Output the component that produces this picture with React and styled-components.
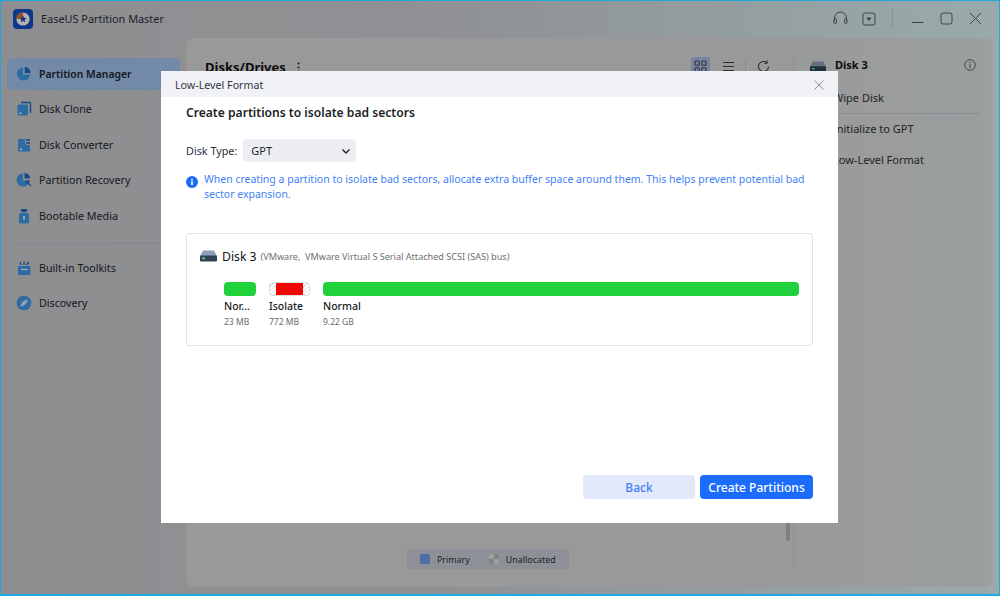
import React from "react";
import styled, { createGlobalStyle } from "styled-components";

const Global = createGlobalStyle`
  html, body { margin: 0; padding: 0; background: #8f9296; }
  * { box-sizing: border-box; }
  #root { width: 1000px; height: 596px; overflow: hidden; }
`;

const Window = styled.div`
  position: relative;
  width: 1000px;
  height: 596px;
  overflow: hidden;
  display: grid;
  grid-template-columns: 185px 1fr;
  grid-template-rows: 37px 1fr;
  font-family: "Noto Sans", "Open Sans", sans-serif;
  color: #1d2129;
  background: linear-gradient(90deg, #cccccf 0%, #cdd0d4 45%, #dcf4f4 100%);
  border: 1px solid #1fa9e4;
  border-bottom-width: 2px;
`;

const TitleBar = styled.header`
  grid-column: 1 / 3;
  display: flex;
  align-items: center;
  padding: 0 16px 2px 12px;
`;

const AppName = styled.span`
  margin-left: 8px;
  font-size: 10.9px;
  color: #2c2f36;
  flex: 1;
`;

const TitleIcons = styled.div`
  display: flex;
  align-items: center;
  color: #5a6068;
`;

const TitleBtn = styled.span`
  display: flex;
  width: 16px;
  justify-content: center;
  margin-left: ${(p) => p.$gap || 0}px;
`;

const VRule = styled.span`
  width: 1px;
  height: 18px;
  background: #c6cfcf;
  margin-left: 15px;
`;

const Sidebar = styled.nav`
  display: flex;
  flex-direction: column;
  padding: 19.5px 6px 0 6px;
`;

const NavItem = styled.div`
  display: flex;
  align-items: center;
  gap: 7px;
  height: 32px;
  margin-bottom: 3.5px;
  padding-left: 9px;
  border-radius: 5px;
  font-size: ${(p) => (p.$active ? 10.4 : 10.7)}px;
  font-weight: ${(p) => (p.$active ? 600 : 400)};
  color: #22262e;
  background: ${(p) => (p.$active ? "#a4c4f1" : "transparent")};
`;

const NavRule = styled.div`
  height: 1px;
  margin: 8px 0 7.5px 8px;
  background: #bcbdc9;
`;

const Panel = styled.main`
  position: relative;
  margin: 0 6px 7px 0;
  border-radius: 8px;
  background: linear-gradient(90deg, #dbdbdb 70%, #e0e4e4 100%);
`;

const DisksTitle = styled.h2`
  position: absolute;
  left: 19px;
  top: 20px;
  margin: 0;
  font-size: 13px;
  font-weight: 700;
  color: #111;
`;

const Kebab = styled.span`
  position: absolute;
  left: 111px;
  top: 24px;
  display: flex;
`;

const PanelTools = styled.div`
  position: absolute;
  left: 505px;
  top: 19px;
  display: flex;
  align-items: center;
  color: #40454d;
`;

const ToolActive = styled.span`
  display: flex;
  align-items: center;
  justify-content: center;
  width: 19px;
  height: 19px;
  border-radius: 3px;
  background: #a9c0e6;
`;

const ToolGap = styled.span`
  display: flex;
  margin-left: ${(p) => p.$gap}px;
`;

const ToolRule = styled.span`
  width: 1px;
  height: 16px;
  margin-left: ${(p) => p.$gap}px;
  background: #c4c4c4;
`;

const SidePanel = styled.aside`
  position: absolute;
  left: 607px;
  top: 0;
  right: 0;
  bottom: 0;
  padding: 19px 17px 0 42px;
  font-size: 11px;
  color: #333;

  &::before {
    content: "";
    position: absolute;
    left: 0;
    top: 19px;
    bottom: 18px;
    width: 1px;
    background: #d0d0d0;
  }
`;

const SideDisk = styled.span`
  position: absolute;
  left: 17px;
  top: 23px;
  display: flex;
`;

const SideHead = styled.div`
  display: flex;
  justify-content: space-between;
  align-items: center;
  font-size: 11px;
  font-weight: 700;
  color: #111;
  margin-bottom: 18px;
`;

const SideItem = styled.div`
  height: ${(p) => p.$h || 31}px;
  margin-left: -2px;
  margin-right: ${(p) => (p.$rule ? -3 : 0)}px;
  margin-bottom: ${(p) => p.$mb || 0}px;
  border-bottom: ${(p) => (p.$rule ? "1px solid #c8c8d6" : "0")};
`;

const Legend = styled.div`
  position: absolute;
  left: 221px;
  bottom: 18px;
  display: flex;
  align-items: center;
  height: 20px;
  padding: 0 13px;
  border-radius: 4px;
  background: #ccced9;
  font-size: 8.9px;
  color: #333;
`;

const Swatch = styled.span`
  width: 10px;
  height: 10px;
  margin-left: ${(p) => p.$ml || 0}px;
  margin-right: 7px;
  border-radius: 1px;
  background: ${(p) => p.$bg};
`;

const Scroll = styled.span`
  position: absolute;
  left: 600px;
  top: 470px;
  width: 4px;
  height: 33px;
  border-radius: 3px;
  background: #b8b8b8;
`;

const Overlay = styled.div`
  position: absolute;
  inset: 0;
  background: rgba(0, 0, 0, 0.3);
`;

const Modal = styled.section`
  position: absolute;
  left: 160px;
  top: 70px;
  width: 677px;
  height: 452px;
  display: flex;
  flex-direction: column;
  background: #fff;
`;

const ModalHead = styled.div`
  display: flex;
  align-items: center;
  justify-content: space-between;
  height: 26px;
  padding: 2px 14px 0 14px;
  flex: none;
  background: #f1f2f7;
  font-size: 10.7px;
  color: #333842;
`;

const ModalBody = styled.div`
  flex: 1;
  display: flex;
  flex-direction: column;
  padding: 7px 25px 24px 25px;
`;

const Heading = styled.h3`
  margin: 0 0 17px;
  font-size: 12.1px;
  line-height: 18px;
  font-weight: 600;
  color: #1c1f26;
`;

const TypeRow = styled.div`
  display: flex;
  align-items: center;
  gap: 6px;
  font-size: 10.8px;
  color: #2b2f37;
`;

const Select = styled.div`
  width: 113px;
  height: 23px;
  display: flex;
  align-items: center;
  justify-content: space-between;
  padding: 0 5px 0 8px;
  border-radius: 4px;
  background: #eceef3;
  font-size: 11px;
  color: #20242c;
`;

const Notice = styled.div`
  display: flex;
  gap: 6px;
  margin-top: 10px;
  font-size: 10.5px;
  line-height: 15px;
  color: #3f7ff7;
`;

const NoticeIcon = styled.span`
  flex: none;
  margin-top: 4px;
  height: 12px;
`;

const DiskCard = styled.div`
  margin-top: 31px;
  height: 113px;
  padding: 13px 13px 0 13px;
  border: 1px solid #dfe2e8;
  border-radius: 3px;
`;

const DiskHead = styled.div`
  display: flex;
  align-items: center;
  gap: 5px;
  height: 18px;
  font-size: 12.2px;
  color: #111;
`;

const DiskNote = styled.span`
  margin-left: -1px;
  font-size: 9.1px;
  color: #6b6f76;
`;

const Bars = styled.div`
  display: flex;
  gap: 13px;
  margin: 17px 0 0 24px;
`;

const Part = styled.div`
  flex: ${(p) => (p.$grow ? 1 : "none")};
  width: ${(p) => p.$w}px;
`;

const GreenBar = styled.div`
  height: 14px;
  border-radius: 4px;
  background: #1fd13a;
`;

const StripeBar = styled.div`
  height: 14px;
  padding: 0 6px;
  border: 1px solid #e0e0e0;
  border-radius: 3px;
  background: repeating-linear-gradient(135deg, #fff 0 2px, #ddd 2px 3px);
`;

const RedFill = styled.div`
  height: 100%;
  background: #f10606;
`;

const PartName = styled.div`
  margin-top: 2px;
  font-size: 10.5px;
  line-height: 16px;
  font-weight: 500;
  color: #1a1d23;
  white-space: nowrap;
`;

const PartSize = styled.div`
  margin-top: 1px;
  font-size: 8.5px;
  line-height: 13px;
  color: #666b72;
`;

const Actions = styled.div`
  margin-top: auto;
  display: flex;
  justify-content: flex-end;
  gap: 5px;
`;

const Button = styled.button`
  width: ${(p) => p.$w}px;
  height: 24px;
  padding: 0;
  border: 0;
  border-radius: 4px;
  font: 500 12px "Noto Sans", sans-serif;
  color: ${(p) => (p.$primary ? "#fff" : "#3f7ff7")};
  background: ${(p) => (p.$primary ? "#1c6cfb" : "#e2e9fa")};
`;

const Logo = () => (
  <svg width="20" height="20" viewBox="0 0 20 20">
    <rect width="20" height="20" rx="4" fill="#1450c8" />
    <circle cx="10" cy="10" r="6.6" fill="#fff" />
    <path d="M10 3.4A6.6 6.6 0 0 0 3.4 10H10Z" fill="#e8752a" />
    <path d="M10 6.3l1.1 2.4 2.5.3-1.9 1.7.5 2.5-2.2-1.3-2.2 1.3.5-2.5L6.4 9l2.5-.3Z" fill="#1d4fa8" />
  </svg>
);

const ic = "#3f9be8";
const icd = "#1f68c4";
const icons = {
  pie: (
    <svg width="16" height="16" viewBox="0 0 16 16">
      <path d="M7 1.5v7.2h7A6.5 6.5 0 1 1 7 1.5Z" fill={ic} />
      <path d="M8.8 1a6 6 0 0 1 5.8 6H8.8Z" fill={icd} />
    </svg>
  ),
  clone: (
    <svg width="16" height="16" viewBox="0 0 16 16">
      <path d="M5 1.5h8.5a1 1 0 0 1 1 1V12" fill="none" stroke={icd} strokeWidth="1.3" />
      <rect x="1.5" y="3.5" width="10.5" height="11" rx="1.5" fill={ic} />
      <rect x="3.3" y="11.5" width="2" height="1.5" fill="#fff" />
    </svg>
  ),
  conv: (
    <svg width="16" height="16" viewBox="0 0 16 16">
      <path d="M2 2h7v4.5L10.5 8H14v6.5H2Z" fill={ic} />
      <path d="M10 3h4M10 6h4" stroke={icd} strokeWidth="1.4" />
      <rect x="4" y="11.5" width="2" height="1.5" fill="#fff" />
    </svg>
  ),
  rec: (
    <svg width="16" height="16" viewBox="0 0 16 16">
      <path d="M7 1.5v7h6.5A6.5 6.5 0 1 1 7 1.5Z" fill={ic} />
      <path d="M8.5 1a5.5 5.5 0 0 1 5.5 5.5H8.5Z" fill={icd} />
      <path d="M15 14l-3.5-3.5M9.5 11l2-2 2 .5" stroke={icd} strokeWidth="1.4" fill="none" />
    </svg>
  ),
  boot: (
    <svg width="16" height="16" viewBox="0 0 16 16">
      <rect x="5" y="1" width="6" height="3" rx="1" fill={icd} />
      <rect x="3" y="5" width="10" height="10.5" rx="1.5" fill={ic} />
      <rect x="7.2" y="8" width="1.6" height="3.5" fill="#fff" />
    </svg>
  ),
  kit: (
    <svg width="16" height="16" viewBox="0 0 16 16">
      <rect x="2" y="6" width="12.5" height="9" rx="1" fill={ic} />
      <path d="M5 9.5h6.5" stroke="#fff" strokeWidth="1.2" />
      <path d="M4 2l1 3M8 1.5V5M13 2l-2.5 3" stroke={icd} strokeWidth="1.3" />
    </svg>
  ),
  disc: (
    <svg width="16" height="16" viewBox="0 0 16 16">
      <circle cx="8" cy="8" r="7.3" fill={ic} />
      <path d="M4.5 11.5C5 7.5 7.5 5 11.5 4.5 11.5 8.5 9 11 4.5 11.5Z" fill="#d5e6f6" />
    </svg>
  ),
};

const HardDisk = ({ w = 17 }) => (
  <svg width={w} height={(w * 12) / 17} viewBox="0 0 17 12">
    <path d="M3 0.5h11L17 6H0Z" fill="#8ba0b8" />
    <rect y="5.5" width="17" height="6" rx="1" fill="#2f4157" />
    <rect x="2" y="7.5" width="3" height="1.6" fill="#58e08a" />
  </svg>
);

const nav = [
  ["pie", "Partition Manager", true],
  ["clone", "Disk Clone"],
  ["conv", "Disk Converter"],
  ["rec", "Partition Recovery"],
  ["boot", "Bootable Media"],
];

export default function App() {
  return (
    <Window>
      <Global />
      <TitleBar>
        <Logo />
        <AppName>EaseUS Partition Master</AppName>
        <TitleIcons>
          <TitleBtn>
            <svg width="15" height="16" viewBox="0 0 15 16" fill="none" stroke="currentColor" strokeWidth="1">
              <path d="M1.5 10V7a6 6 0 0 1 12 0v3" />
              <rect x="1" y="7.5" width="2.5" height="5" rx="1.2" />
              <rect x="11.5" y="7.5" width="2.5" height="5" rx="1.2" />
            </svg>
          </TitleBtn>
          <TitleBtn $gap={13}>
            <svg width="14" height="14" viewBox="0 0 14 14" fill="none" stroke="currentColor" strokeWidth="1">
              <rect x="1" y="1" width="12" height="12" rx="2" />
              <path d="M5 6h4L7 8.5Z" fill="currentColor" />
            </svg>
          </TitleBtn>
          <VRule />
          <TitleBtn $gap={16}>
            <svg width="13" height="13" viewBox="0 0 13 13" stroke="currentColor" strokeWidth="1">
              <path d="M1 10.5h11.5" />
            </svg>
          </TitleBtn>
          <TitleBtn $gap={13}>
            <svg width="13" height="13" viewBox="0 0 13 13" fill="none" stroke="currentColor" strokeWidth="1">
              <rect x="1" y="1" width="11" height="11" rx="2" />
            </svg>
          </TitleBtn>
          <TitleBtn $gap={13}>
            <svg width="13" height="13" viewBox="0 0 13 13" stroke="currentColor" strokeWidth="1">
              <path d="M1 1l11 11M12 1L1 12" />
            </svg>
          </TitleBtn>
        </TitleIcons>
      </TitleBar>

      <Sidebar>
        {nav.map(([k, label, active]) => (
          <NavItem key={k} $active={active}>
            {icons[k]}
            {label}
          </NavItem>
        ))}
        <NavRule />
        <NavItem>{icons.kit}Built-in Toolkits</NavItem>
        <NavItem>{icons.disc}Discovery</NavItem>
      </Sidebar>

      <Panel>
        <DisksTitle>Disks/Drives</DisksTitle>
        <Kebab>
          <svg width="3" height="11" viewBox="0 0 3 11" fill="#333">
            <circle cx="1.5" cy="1.5" r="1.1" />
            <circle cx="1.5" cy="5.5" r="1.1" />
            <circle cx="1.5" cy="9.5" r="1.1" />
          </svg>
        </Kebab>
        <PanelTools>
          <ToolActive>
            <svg width="13" height="13" viewBox="0 0 13 13" fill="none" stroke="currentColor" strokeWidth="1.1">
              <rect x="1" y="1" width="4.2" height="4.2" rx="1" />
              <rect x="7.8" y="1" width="4.2" height="4.2" rx="1" />
              <rect x="1" y="7.8" width="4.2" height="4.2" rx="1" />
              <rect x="7.8" y="7.8" width="4.2" height="4.2" rx="1" />
            </svg>
          </ToolActive>
          <ToolGap $gap={12}>
            <svg width="13" height="13" viewBox="0 0 13 13" stroke="currentColor" strokeWidth="1.1">
              <path d="M1 2.5h11M1 6.5h11M1 10.5h11" />
            </svg>
          </ToolGap>
          <ToolRule $gap={10} />
          <ToolGap $gap={11}>
            <svg width="13" height="13" viewBox="0 0 13 13" fill="none" stroke="currentColor" strokeWidth="1.1">
              <path d="M11.5 6.5a5 5 0 1 1-1.6-3.7" />
              <path d="M10 .6v2.6H7.4" />
            </svg>
          </ToolGap>
        </PanelTools>
        <SidePanel>
          <SideDisk>
            <HardDisk w={16} />
          </SideDisk>
          <SideHead>
            <span>Disk 3</span>
            <svg width="12" height="12" viewBox="0 0 12 12" fill="none" stroke="#555" strokeWidth="0.9">
              <circle cx="6" cy="6" r="5.3" />
              <path d="M6 5v4M6 3v1.1" />
            </svg>
          </SideHead>
          <SideItem $rule $h={24} $mb={7}>Wipe Disk</SideItem>
          <SideItem>Initialize to GPT</SideItem>
          <SideItem>Low-Level Format</SideItem>
        </SidePanel>
        <Scroll />
        <Legend>
          <Swatch $bg="#6f9cf0" />
          Primary
          <Swatch $ml={19} $bg="repeating-conic-gradient(#bbb 0 25%, #e4e4e4 0 50%) 0 0 / 10px 10px" />
          Unallocated
        </Legend>
      </Panel>

      <Overlay />

      <Modal>
        <ModalHead>
          Low-Level Format
          <svg width="10" height="10" viewBox="0 0 10 10" stroke="#777" strokeWidth="0.8">
            <path d="M.5.5l9 9M9.5.5l-9 9" />
          </svg>
        </ModalHead>
        <ModalBody>
          <Heading>Create partitions to isolate bad sectors</Heading>
          <TypeRow>
            Disk Type:
            <Select>
              GPT
              <svg width="10" height="10" viewBox="0 0 10 10" fill="none" stroke="#222" strokeWidth="1.4">
                <path d="M1.5 3.5L5 7l3.5-3.5" />
              </svg>
            </Select>
          </TypeRow>
          <Notice>
            <NoticeIcon>
              <svg width="12" height="12" viewBox="0 0 12 12">
                <circle cx="6" cy="6" r="6" fill="#1c6cfb" />
                <rect x="5.2" y="5" width="1.6" height="4" fill="#fff" />
                <rect x="5.2" y="2.8" width="1.6" height="1.5" fill="#fff" />
              </svg>
            </NoticeIcon>
            <span>
              When creating a partition to isolate bad sectors, allocate extra buffer space around them. This helps prevent potential bad
              sector expansion.
            </span>
          </Notice>
          <DiskCard>
            <DiskHead>
              <HardDisk />
              Disk 3
              <DiskNote>(VMware,&nbsp; VMware Virtual S Serial Attached SCSI (SAS) bus)</DiskNote>
            </DiskHead>
            <Bars>
              <Part $w={32}>
                <GreenBar />
                <PartName>Nor...</PartName>
                <PartSize>23 MB</PartSize>
              </Part>
              <Part $w={41}>
                <StripeBar>
                  <RedFill />
                </StripeBar>
                <PartName>Isolate</PartName>
                <PartSize>772 MB</PartSize>
              </Part>
              <Part $grow>
                <GreenBar />
                <PartName>Normal</PartName>
                <PartSize>9.22 GB</PartSize>
              </Part>
            </Bars>
          </DiskCard>
          <Actions>
            <Button $w={112}>Back</Button>
            <Button $primary $w={113}>Create Partitions</Button>
          </Actions>
        </ModalBody>
      </Modal>
    </Window>
  );
}
